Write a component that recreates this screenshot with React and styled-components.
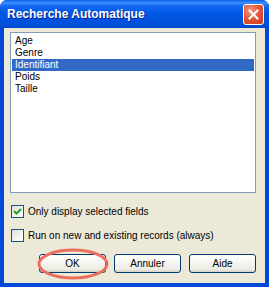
import React, { useState } from 'react';
import styled, { createGlobalStyle } from 'styled-components';

const FIELDS = ['Age', 'Genre', 'Identifiant', 'Poids', 'Taille'];

const App = () => {
  const [selected, setSelected] = useState('Identifiant');
  const [onlySelected, setOnlySelected] = useState(true);
  const [runAlways, setRunAlways] = useState(false);

  return (
    <>
      <GlobalStyle />
      <Window>
        <TitleBar>
          <Title>Recherche Automatique</Title>
          <CloseButton aria-label="Fermer">
            <svg width="11" height="11" viewBox="0 0 11 11">
              <path d="M1.5 1.5 L9.5 9.5 M9.5 1.5 L1.5 9.5" stroke="white" strokeWidth="2" strokeLinecap="square" />
            </svg>
          </CloseButton>
        </TitleBar>
        <Client>
          <ListBox>
            {FIELDS.map((f) => (
              <ListItem key={f} $active={f === selected} onClick={() => setSelected(f)}>
                {f}
              </ListItem>
            ))}
          </ListBox>

          <CheckRow $top={12} onClick={() => setOnlySelected(!onlySelected)}>
            <CheckBox>
              {onlySelected && (
                <svg width="9" height="9" viewBox="0 0 9 9">
                  <path d="M1 4 L3.5 6.5 L8 2" stroke="#21A121" strokeWidth="2" fill="none" />
                </svg>
              )}
            </CheckBox>
            Only display selected fields
          </CheckRow>

          <CheckRow $top={11} onClick={() => setRunAlways(!runAlways)}>
            <CheckBox>
              {runAlways && (
                <svg width="9" height="9" viewBox="0 0 9 9">
                  <path d="M1 4 L3.5 6.5 L8 2" stroke="#21A121" strokeWidth="2" fill="none" />
                </svg>
              )}
            </CheckBox>
            Run on new and existing records (always)
          </CheckRow>

          <ButtonRow>
            <ButtonWrap>
              <Button>OK</Button>
              <Highlight width="72" height="32" viewBox="0 0 72 32">
                <ellipse cx="36" cy="16" rx="34" ry="14" fill="none" stroke="#EC6F5E" strokeWidth="3" />
              </Highlight>
            </ButtonWrap>
            <Button>Annuler</Button>
            <Button>Aide</Button>
          </ButtonRow>
        </Client>
      </Window>
    </>
  );
};

const GlobalStyle = createGlobalStyle`
  html, body {
    margin: 0;
    padding: 0;
    background: #ffffff;
  }
  body {
    font-family: "Liberation Sans", Arial, sans-serif;
  }
`;

const Window = styled.div`
  width: 269px;
  height: 287px;
  display: flex;
  flex-direction: column;
  background: #0049D8;
  border-radius: 7px 7px 0 0;
  overflow: hidden;
  box-sizing: border-box;
  padding: 0 4px 4px;
`;

const TitleBar = styled.div`
  height: 28px;
  margin: 0 -4px;
  padding: 0 5px 0 7px;
  display: flex;
  align-items: center;
  justify-content: space-between;
  background: linear-gradient(
    #0A5FEA 0%,
    #3D8FFB 10%,
    #1268F0 22%,
    #0058E6 45%,
    #0053DF 70%,
    #0050DA 90%,
    #0046CB 100%
  );
  flex-shrink: 0;
`;

const Title = styled.div`
  color: #ffffff;
  font-weight: bold;
  font-size: 12px;
  text-shadow: 1px 1px 0 #0A1E8C;
  padding-bottom: 1px;
`;

const CloseButton = styled.div`
  width: 19px;
  height: 19px;
  margin-top: 1px;
  border: 1px solid #ffffff;
  border-radius: 3px;
  background: radial-gradient(circle at 35% 30%, #F29A7C 0%, #E4593A 45%, #CC3715 100%);
  display: flex;
  align-items: center;
  justify-content: center;
`;

const Client = styled.div`
  flex: 1;
  background: #ECE9D8;
  padding: 4px 9px 0 6px;
  display: flex;
  flex-direction: column;
`;

const ListBox = styled.div`
  height: 161px;
  background: #ffffff;
  border: 1px solid #7F9DB9;
  padding: 2px 1px 0 1px;
  box-sizing: border-box;
`;

const ListItem = styled.div`
  height: 12px;
  line-height: 12px;
  font-size: 10px;
  padding-left: 3px;
  color: ${(p) => (p.$active ? '#ffffff' : '#000000')};
  background: ${(p) => (p.$active ? '#316AC5' : 'transparent')};
  cursor: default;
`;

const CheckRow = styled.label`
  display: flex;
  align-items: center;
  gap: 4px;
  margin-top: ${(p) => p.$top}px;
  margin-left: 1px;
  font-size: 10px;
  color: #000000;
  height: 13px;
  cursor: default;
`;

const CheckBox = styled.span`
  width: 11px;
  height: 11px;
  border: 1px solid #1C5180;
  background: linear-gradient(135deg, #DCDCD7 0%, #F5F5F2 60%, #ffffff 100%);
  display: inline-flex;
  align-items: center;
  justify-content: center;
  flex-shrink: 0;
`;

const ButtonRow = styled.div`
  display: flex;
  justify-content: flex-end;
  gap: 8px;
  margin-top: 12px;
`;

const ButtonWrap = styled.div`
  position: relative;
  display: flex;
`;

const Button = styled.button`
  width: 67px;
  height: 19px;
  padding: 0;
  border: 1px solid #003C74;
  border-radius: 3px;
  background: linear-gradient(#ffffff 0%, #F6F6F3 40%, #ECEBE4 85%, #D6D0C5 100%);
  font-family: "Liberation Sans", Arial, sans-serif;
  font-size: 10px;
  color: #000000;
`;

const Highlight = styled.svg`
  position: absolute;
  left: -2px;
  top: -6px;
  pointer-events: none;
`;

export default App;
